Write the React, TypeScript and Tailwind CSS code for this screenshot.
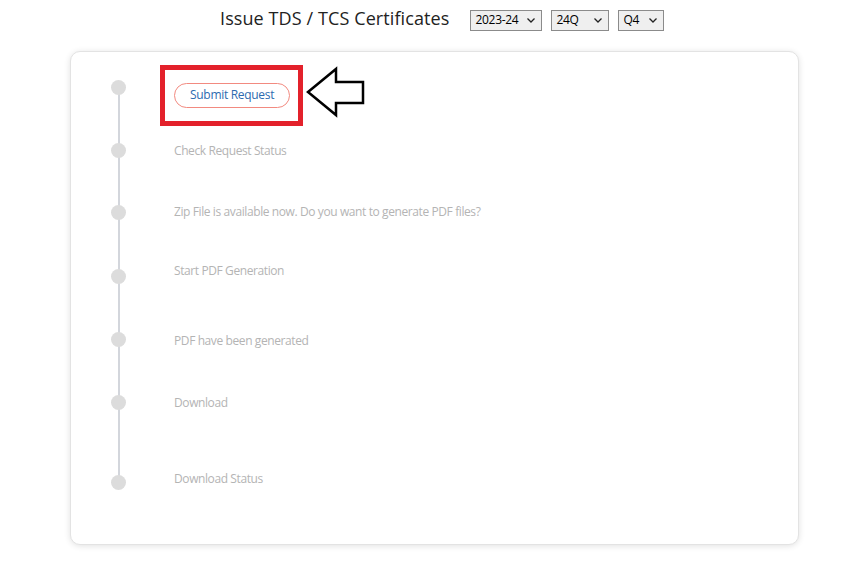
type Step = {
    label: string
    height: string
    textTop: string
}

const steps: Step[] = [
    { label: "Check Request Status", height: "h-[62px]", textTop: "mt-[12px]" },
    { label: "Zip File is available now. Do you want to generate PDF files?", height: "h-[64px]", textTop: "mt-[11px]" },
    { label: "Start PDF Generation", height: "h-[63px]", textTop: "mt-[6px]" },
    { label: "PDF have been generated", height: "h-[63px]", textTop: "mt-[13px]" },
    { label: "Download", height: "h-[80px]", textTop: "mt-[12px]" },
    { label: "Download Status", height: "h-[40px]", textTop: "mt-[8px]" },
]

const FakeSelect = ({ value, width }: { value: string; width: string }) => (
    <div className={`${width} h-[21px] flex items-center justify-between pl-[5px] pr-[6px] border border-[#8b8b8b] bg-[#efefef] text-[12px] tracking-[-0.3px] text-black`}>
        <span>{value}</span>
        <svg width="8" height="5" viewBox="0 0 8 5" className="mt-[1px]">
            <path d="M0.5 0.5 L4 4 L7.5 0.5" fill="none" stroke="#222" strokeWidth="1.3" />
        </svg>
    </div>
)

const Dot = () => <div className="w-[15px] h-[15px] rounded-full bg-[#dcdcdc] relative z-10 mt-[12px] shrink-0" />

const App = () => {
    return (
        <div className="w-[849px] h-[573px] bg-white font-['Open_Sans',sans-serif] overflow-hidden">
            <div className="flex items-center pl-[220px] pt-[4px] h-[36px]">
                <h1 className="text-[18px] text-[#222] leading-[24px] -mt-[4px] tracking-[0.1px]">Issue TDS / TCS Certificates</h1>
                <div className="flex gap-[9px] ml-[20px]">
                    <FakeSelect value="2023-24" width="w-[72px]" />
                    <FakeSelect value="24Q" width="w-[58px]" />
                    <FakeSelect value="Q4" width="w-[46px]" />
                </div>
            </div>

            <div className="ml-[70px] mt-[15px] w-[729px] h-[494px] bg-white border border-[#e3e3e3] rounded-[10px] shadow-[0_1px_6px_rgba(0,0,0,0.12)] pt-[16px] pl-[40px]">
                <div className="relative">
                    {/* vertical rail behind the dots */}
                    <div className="absolute left-[6.5px] top-[19px] w-[2px] h-[395px] bg-[#d3d6dc]" />

                    <div className="flex h-[63px]">
                        <Dot />
                        <div className="flex items-start ml-[34px] -mt-[3px]">
                            <div className="border-[5px] border-[#e3212b] pl-[9px] pr-[8px] pt-[11px] pb-[13px]">
                                <button className="h-[25px] px-[15px] rounded-full border border-[#f28a80] bg-white text-[12px] tracking-[-0.3px] text-[#2d6bb0] leading-none">
                                    Submit Request
                                </button>
                            </div>
                            <svg width="60" height="52" viewBox="0 0 60 52" className="ml-[3px] mt-[1px]">
                                <polygon points="2,26 30,3 30,16 57,16 57,37 30,37 30,49" fill="white" stroke="black" strokeWidth="2.5" strokeLinejoin="miter" />
                            </svg>
                        </div>
                    </div>

                    {steps.map((step) => (
                        <div key={step.label} className={`flex ${step.height}`}>
                            <Dot />
                            <p className={`${step.textTop} ml-[48px] text-[12px] tracking-[-0.4px] leading-[16px] text-[#b4b4b4]`}>{step.label}</p>
                        </div>
                    ))}
                </div>
            </div>
        </div>
    )
}

export default App
